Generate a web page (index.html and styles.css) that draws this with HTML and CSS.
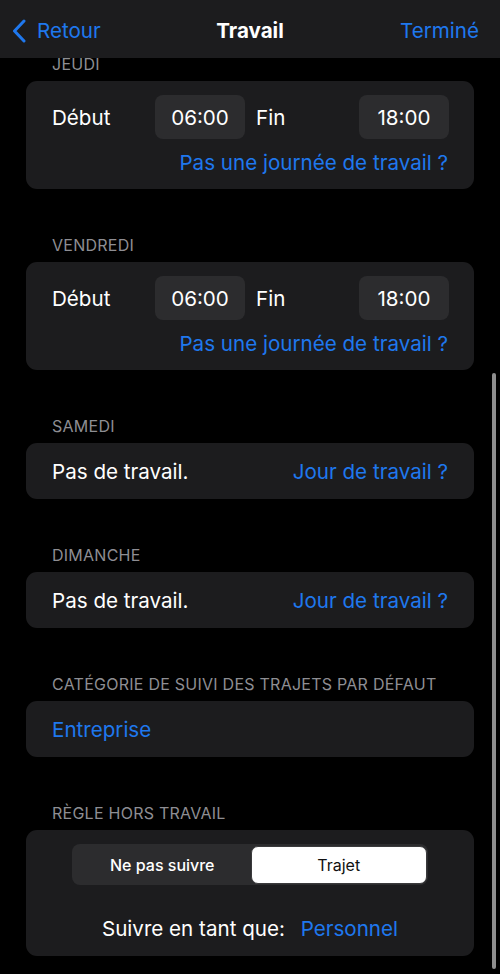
FILE: index.html
```html
<!DOCTYPE html>
<html lang="fr">
<head>
<meta charset="utf-8">
<title>Travail</title>
<link rel="stylesheet" href="styles.css">
</head>
<body>
<div class="screen">
  <header class="nav">
    <a class="nav-back">
      <svg class="chev" viewBox="0 0 14 24" width="14" height="24"><path d="M12 2 L2.5 12 L12 22" fill="none" stroke="#1f78ee" stroke-width="3" stroke-linecap="round" stroke-linejoin="round"/></svg>
      <span>Retour</span>
    </a>
    <div class="nav-title">Travail</div>
    <a class="nav-done">Terminé</a>
  </header>

  <main class="content">
    <section class="section first">
      <div class="label">JEUDI</div>
      <div class="card time-card">
        <div class="time-row">
          <span class="tl">Début</span>
          <span class="pill">06:00</span>
          <span class="tl fin">Fin</span>
          <span class="pill">18:00</span>
        </div>
        <div class="link-row"><a class="link">Pas une journée de travail ?</a></div>
      </div>
    </section>

    <section class="section">
      <div class="label">VENDREDI</div>
      <div class="card time-card">
        <div class="time-row">
          <span class="tl">Début</span>
          <span class="pill">06:00</span>
          <span class="tl fin">Fin</span>
          <span class="pill">18:00</span>
        </div>
        <div class="link-row"><a class="link">Pas une journée de travail ?</a></div>
      </div>
    </section>

    <section class="section">
      <div class="label">SAMEDI</div>
      <div class="card row-card">
        <span>Pas de travail.</span>
        <a class="link">Jour de travail ?</a>
      </div>
    </section>

    <section class="section">
      <div class="label">DIMANCHE</div>
      <div class="card row-card">
        <span>Pas de travail.</span>
        <a class="link">Jour de travail ?</a>
      </div>
    </section>

    <section class="section">
      <div class="label">CATÉGORIE DE SUIVI DES TRAJETS PAR DÉFAUT</div>
      <div class="card row-card">
        <a class="link">Entreprise</a>
      </div>
    </section>

    <section class="section">
      <div class="label">RÈGLE HORS TRAVAIL</div>
      <div class="card rule-card">
        <div class="segmented">
          <div class="seg">Ne pas suivre</div>
          <div class="seg selected">Trajet</div>
        </div>
        <div class="follow">Suivre en tant que: <a class="link">Personnel</a></div>
      </div>
    </section>
  </main>

  <div class="scrollbar"></div>
</div>
</body>
</html>
```

FILE: styles.css
```css
* { box-sizing: border-box; }

html, body {
  margin: 0;
  padding: 0;
  background: #000;
}

body {
  font-family: Inter, "Noto Sans", "Liberation Sans", sans-serif;
  color: #fff;
  -webkit-font-smoothing: antialiased;
}

.screen {
  position: relative;
  width: 500px;
  height: 974px;
  overflow: hidden;
  background: #000;
}

.nav {
  height: 58px;
  background: #1c1c1e;
  display: grid;
  grid-template-columns: 1fr auto 1fr;
  align-items: center;
  padding: 3px 21px 0 21px;
  font-size: 20.6px;
}

.nav-back {
  display: flex;
  align-items: center;
  gap: 11px;
  margin-left: -9px;
  color: #1f78ee;
}

.chev { display: block; }

.nav-title {
  font-weight: 700;
  font-size: 20.6px;
  letter-spacing: 0;
}

.nav-done {
  justify-self: end;
  color: #1f78ee;
}

.content {
  padding: 0 26px;
}

.section {
  margin-top: 47px;
}

.section.first {
  margin-top: 0;
}

.label {
  font-size: 16px;
  line-height: 18px;
  color: #8e8e93;
  padding-left: 26px;
  margin-bottom: 8px;
  letter-spacing: 0.25px;
  white-space: nowrap;
}

.section.first .label {
  margin-top: -3px;
}

.card {
  background: #1c1c1e;
  border-radius: 11px;
  font-size: 20.6px;
}

.time-card {
  padding: 14px 25px 14px 26px;
}

.time-row {
  display: grid;
  grid-template-columns: 103px 90px 1fr 90px;
  align-items: center;
}

.fin {
  padding-left: 11px;
}

.pill {
  height: 44px;
  border-radius: 8px;
  background: #2c2c2e;
  display: flex;
  align-items: center;
  justify-content: center;
}

.link-row {
  display: flex;
  justify-content: flex-end;
  margin-top: 12px;
  line-height: 24px;
  padding-right: 1px;
}

.link {
  color: #1f78ee;
}

.row-card {
  height: 56px;
  display: flex;
  align-items: center;
  justify-content: space-between;
  padding: 0 26px;
}

.rule-card {
  padding: 14px 0 15px;
  display: flex;
  flex-direction: column;
  align-items: center;
}

.segmented {
  width: 356px;
  height: 41px;
  background: #2c2c2e;
  border-radius: 8px;
  padding: 2px 1px 1px 2px;
  display: grid;
  grid-template-columns: 1fr 1fr;
  font-size: 16px;
  font-weight: 500;
}

.seg {
  display: flex;
  align-items: center;
  justify-content: center;
  border-radius: 7px;
}

.seg.selected {
  background: #fff;
  color: #111;
  border: 1px solid #3a3a3c;
  font-weight: 400;
}

.follow {
  margin-top: 32px;
  line-height: 24px;
  font-size: 20.6px;
}

.follow .link {
  margin-left: 10px;
}

.scrollbar {
  position: absolute;
  left: 492px;
  top: 373px;
  width: 4px;
  height: 596px;
  border-radius: 2px;
  background: #8e8e8e;
}
```
